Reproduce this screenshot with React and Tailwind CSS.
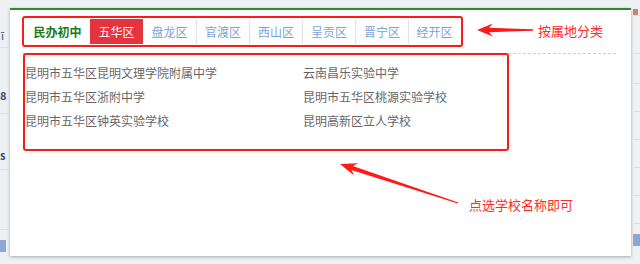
const tabs = ["盘龙区", "官渡区", "西山区", "呈贡区", "晋宁区", "经开区"];

const schools = [
  "昆明市五华区昆明文理学院附属中学",
  "云南昌乐实验中学",
  "昆明市五华区浙附中学",
  "昆明市五华区桃源实验学校",
  "昆明市五华区钟英实验学校",
  "昆明高新区立人学校",
];

// tapered annotation arrow, tail -> tip
const arrowPoints = (tx, ty, px, py, head = 15, hw = 6, s1 = 2, s0 = 0.6) => {
  const len = Math.hypot(px - tx, py - ty);
  const dx = (px - tx) / len;
  const dy = (py - ty) / len;
  const nx = -dy;
  const ny = dx;
  const bx = px - dx * head;
  const by = py - dy * head;
  const nb = px - dx * (head * 0.75);
  const nby = py - dy * (head * 0.75);
  const pts = [
    [tx + nx * s0, ty + ny * s0],
    [nb + nx * s1, nby + ny * s1],
    [bx + nx * hw, by + ny * hw],
    [px, py],
    [bx - nx * hw, by - ny * hw],
    [nb - nx * s1, nby - ny * s1],
    [tx - nx * s0, ty - ny * s0],
  ];
  return pts.map((p) => p.map((v) => v.toFixed(1)).join(",")).join(" ");
};

const App = () => {
  return (
    <div className="w-[640px] h-[264px] bg-[#eef1f4] flex overflow-hidden relative font-['Noto_Sans_CJK_SC','Noto_Sans',sans-serif]">
      {/* left page strip */}
      <div className="w-[9px] shrink-0 flex flex-col text-[11px] leading-none text-[#3b4f7a] overflow-hidden">
        <div className="h-[48px] border-b border-[#dde1e6] pt-[30px] pl-[1px]">ī</div>
        <div className="h-[66px] border-b border-[#dde1e6] pt-[42px] font-bold">8</div>
        <div className="h-[56px] border-b border-[#dde1e6] pt-[36px] font-bold">s</div>
        <div className="h-[60px] border-b border-[#dde1e6]"></div>
        <div className="mt-[10px] h-[12px] w-[6px] bg-[#8fa6d0]"></div>
      </div>

      {/* panel */}
      <div className="mt-[8px] ml-px w-[621px] h-[248px] shrink-0 bg-white border-t-2 border-[#2f8a2f] shadow-[0_1px_3px_rgba(0,0,0,0.3)] px-[12px] pt-[6px]">
        <div className="w-[594px] border-b border-dashed border-[#cfcfcf] pb-[6px]">
          <div className="inline-flex border-2 border-[#ff1a1a] rounded-[3px] p-px">
            <div className="w-[65px] h-[25px] flex items-center justify-center text-[12px] font-bold text-[#1d7a1d]">
              民办初中
            </div>
            <div className="w-[53px] h-[25px] flex items-center justify-center text-[12px] text-white bg-[#e4343d]">
              五华区
            </div>
            {tabs.map((t, i) => (
              <div
                key={t}
                className={`${i === tabs.length - 1 ? "w-[52px]" : "w-[53px]"} h-[25px] flex items-center justify-center text-[12px] text-[#7aa3d8] ${i === 0 ? "" : "border-l border-[#e3e3e3]"}`}
              >
                {t}
              </div>
            ))}
          </div>
        </div>

        <div className="w-[486px] h-[98px] -mt-[1px] ml-px border-2 border-[#ff1a1a] rounded-[3px] pt-[6px]">
          <div className="grid grid-cols-[278px_1fr]">
            {schools.map((s) => (
              <div key={s} className="h-[24px] flex items-center text-[12px] text-[#666]">
                {s}
              </div>
            ))}
          </div>
        </div>
      </div>

      {/* right page strip */}
      <div className="flex-1 flex flex-col pl-[2px]">
        <div className="h-[16px] border-b border-[#dde1e6] flex items-end">
          <div className="w-[5px] h-[6px] bg-[#c9866b]"></div>
        </div>
        <div className="h-[38px] border-b border-[#dde1e6]"></div>
        <div className="h-[30px] border-b border-[#dde1e6]"></div>
        <div className="h-[28px] border-b border-[#dde1e6]"></div>
        <div className="h-[28px] border-b border-[#dde1e6]"></div>
        <div className="h-[28px] border-b border-[#dde1e6]"></div>
        <div className="h-[28px] border-b border-[#dde1e6]"></div>
        <div className="h-[28px] border-b border-[#dde1e6]"></div>
        <div className="mt-[10px] h-[12px] bg-[#8fa6d0]"></div>
      </div>

      {/* annotations */}
      <svg className="absolute inset-0 pointer-events-none" width="640" height="264">
        <polygon points={arrowPoints(533, 30, 477, 30, 16, 6.5, 2.2, 0.7)} fill="#ff1a1a" />
        <polygon points={arrowPoints(458, 203, 340, 164, 17, 6.5, 2.2, 0.6)} fill="#ff1a1a" />
      </svg>
      <div className="absolute left-[538px] top-[22px] text-[13px] leading-[18px] text-[#ff2a2a]">
        按属地分类
      </div>
      <div className="absolute left-[469px] top-[196px] text-[13px] leading-[18px] text-[#ff2a2a]">
        点选学校名称即可
      </div>
    </div>
  );
};

export default App;
